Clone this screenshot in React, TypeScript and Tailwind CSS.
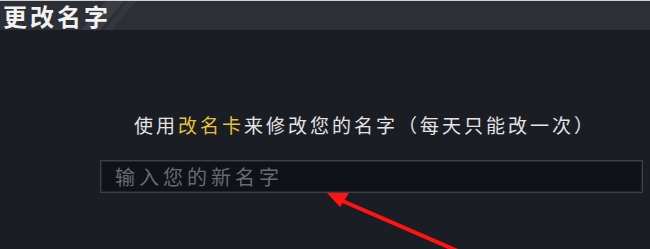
import React from "react";

const FONT = { fontFamily: '"Noto Sans CJK SC", "Noto Sans", sans-serif' };

function HeaderStripes() {
  return (
    <svg className="absolute inset-0 h-full w-full" viewBox="0 0 650 30" preserveAspectRatio="none">
      <polygon points="106,0 124,0 100,30 82,30" fill="#ffffff" fillOpacity="0.07" />
      <polygon points="128,0 136,0 112,30 104,30" fill="#ffffff" fillOpacity="0.04" />
    </svg>
  );
}

function RedArrow() {
  return (
    <svg className="pointer-events-none absolute left-0 top-0" width="650" height="249" viewBox="0 0 650 249">
      <line x1="460" y1="252" x2="338" y2="199" stroke="#ff1414" strokeWidth="4" strokeLinecap="round" />
      <polygon points="327,193 349,193 340,207" fill="#ff1414" />
    </svg>
  );
}

export default function App() {
  return (
    <div className="relative h-[249px] w-[650px] overflow-hidden bg-[#1b1d24]" style={FONT}>
      <div className="relative flex h-[30px] items-center border-t border-[#cfd1d4] bg-[#2c2f36]">
        <HeaderStripes />
        <h1 className="relative pl-[3px] text-[24px] leading-[26px] font-bold tracking-[3px] text-[#f2f2f2]">
          更改名字
        </h1>
      </div>

      <div className="flex flex-col items-start">
        <p className="mt-[83px] ml-[134px] text-[19px] leading-[24px] tracking-[3px] text-[#e4e4e4]">
          使用<span className="text-[#e3c23c]">改名卡</span>来修改您的名字（每天只能改一次）
        </p>
        <div className="mt-[23px] ml-[100px] flex h-[33px] w-[543px] items-center border border-[#3d4048] bg-[#10121a] pl-[14px] shadow-[inset_0_0_0_1px_#22252d]">
          <span className="text-[20px] leading-[24px] tracking-[4px] text-[#686a70]">输入您的新名字</span>
        </div>
      </div>

      <RedArrow />
    </div>
  );
}
